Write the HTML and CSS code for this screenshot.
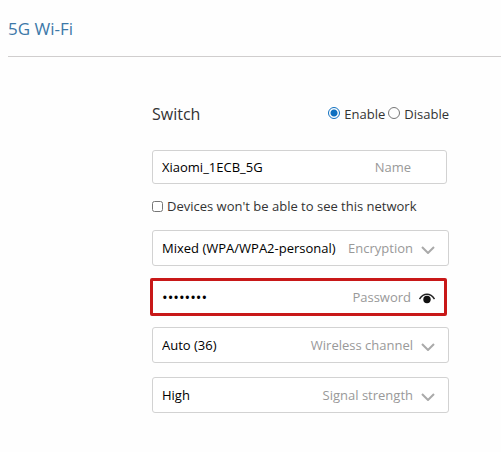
FILE: index.html
```html
<!DOCTYPE html>
<html lang="en">
<head>
<meta charset="utf-8">
<title>5G Wi-Fi</title>
<link rel="stylesheet" href="styles.css">
</head>
<body>

<h1 class="title">5G Wi-Fi</h1>

<form class="wifi-form">

  <div class="switch" role="radiogroup" aria-labelledby="switch-label">
    <span class="switch-label" id="switch-label">Switch</span>
    <label class="option"><input type="radio" name="switch" value="on" checked>Enable</label>
    <label class="option"><input type="radio" name="switch" value="off">Disable</label>
  </div>

  <div class="field text">
    <input type="text" id="name" value="Xiaomi_1ECB_5G">
    <label for="name">Name</label>
  </div>

  <label class="hide-network"><input type="checkbox" name="hidden">Devices won't be able to see this network</label>

  <div class="field">
    <select id="encryption">
      <option>Mixed (WPA/WPA2-personal)</option>
    </select>
    <label for="encryption">Encryption</label>
    <svg class="arrow" viewBox="0 0 14 8"><path d="M1 1l6 6 6-6"/></svg>
  </div>

  <div class="field password">
    <input type="password" id="password" value="12345678">
    <label for="password">Password</label>
    <button type="button" class="eye" aria-label="Show password">
      <svg viewBox="0 0 16 11"><path d="M.5 6C2.500 2.800 5 1.200 8 1.200S13.500 2.800 15.500 6"/><circle cx="8" cy="6.500" r="3.700"/></svg>
    </button>
  </div>

  <div class="field">
    <select id="channel">
      <option>Auto (36)</option>
    </select>
    <label for="channel">Wireless channel</label>
    <svg class="arrow" viewBox="0 0 14 8"><path d="M1 1l6 6 6-6"/></svg>
  </div>

  <div class="field">
    <select id="signal">
      <option>High</option>
    </select>
    <label for="signal">Signal strength</label>
    <svg class="arrow" viewBox="0 0 14 8"><path d="M1 1l6 6 6-6"/></svg>
  </div>

</form>

<script>
  document.querySelector(".eye").onclick = function () {
    const input = document.getElementById("password");
    input.type = input.type === "password" ? "text" : "password";
  };
</script>

</body>
</html>
```
FILE: styles.css
```css
* { box-sizing: border-box; }

body {
  margin: 0;
  background-color: #fefefe;
  color: #333;
  font: 13px/20px "Open Sans", "Noto Sans", sans-serif;
}

.title {
  margin: 0 0 0 8px;
  padding: 16px 0 14px;
  border-bottom: 1px solid #d0cece;
  color: #3c78a8;
  font-size: 17px;
  font-weight: 400;
  line-height: 26px;
}

.wifi-form {
  display: flex;
  flex-direction: column;
  padding: 44px 52px 30px 152px;
}

.switch {
  display: flex;
  align-items: center;
  height: 26px;
  margin-bottom: 23px;
}

.switch-label { flex: 1; font-size: 16px; }

.option { display: flex; align-items: center; }
.option + .option { margin-left: 3px; }

.option input {
  appearance: none;
  width: 12px;
  height: 12px;
  margin: 0 4px 2px 0;
  border: 1px solid #767676;
  border-radius: 50%;
}

.option input:checked {
  border-color: #0f70c0;
  background: radial-gradient(circle, #0f70c0 3px, #fff 4px);
}

.hide-network {
  display: flex;
  align-items: center;
  height: 20px;
  margin: 12px 0 14px;
  white-space: nowrap;
}

.hide-network input {
  width: 11px;
  height: 11px;
  margin: 0 4px 0 0;
}

/* control, its caption and the icon share one row, the control lies under both */
.field {
  display: grid;
  grid-template-columns: 1fr auto 35px;
  align-items: center;
  height: 36px;
  margin-bottom: 14px;
  border: 1px solid #d2d2d2;
  border-radius: 3px;
  background: #fff;
}

.field > * { grid-row: 1; }

.field > input,
.field > select {
  grid-column: 1 / -1;
  appearance: none;
  width: 100%;
  height: 100%;
  padding: 0 9px;
  border: 0;
  background: none;
  color: #000;
  font: inherit;
  outline: none;
}

.field > input[type="password"] { font-size: 15px; }

.field > label { grid-column: 2; color: #999; pointer-events: none; }

.arrow {
  grid-column: 3;
  width: 14px;
  height: 8px;
  margin: 4px 0 0 8px;
  fill: none;
  stroke: #aaa;
  stroke-width: 2;
  pointer-events: none;
}

.text { height: 34px; margin: 0 2px 0 0; }

.password {
  height: 38px;
  margin: -2px 2px 11px -2px;
  border: 3px solid #c81818;
  border-radius: 2px;
  grid-template-columns: 1fr auto 33px;
}

.eye {
  grid-column: 3;
  display: flex;
  margin: 2px 0 0 8px;
  padding: 0;
  border: 0;
  background: none;
  cursor: pointer;
}

.eye svg { width: 16px; height: 11px; fill: #111; }
.eye path { fill: none; stroke: #222; stroke-width: 1.500; }
```
